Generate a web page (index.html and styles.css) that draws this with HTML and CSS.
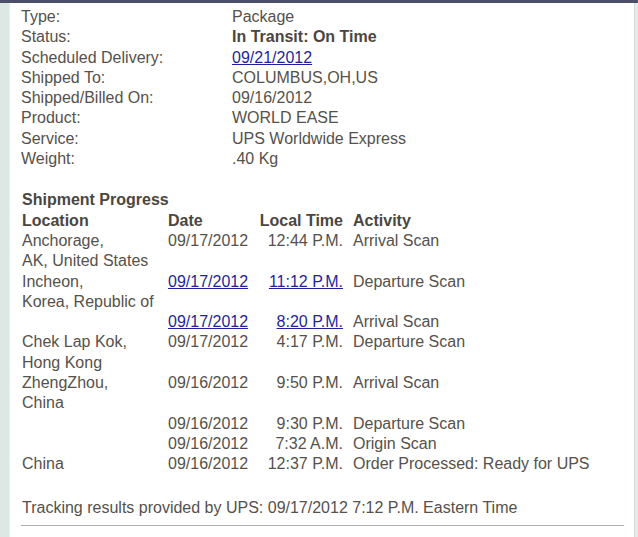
FILE: index.html
```html
<!DOCTYPE html>
<html>
<head>
<meta charset="utf-8">
<link rel="stylesheet" href="styles.css">
</head>
<body>
<div class="topbar"></div>
<div class="frame">
  <div class="side-left"></div>
  <main class="content">
    <div class="details">
      <div class="k">Type:</div><div class="v">Package</div>
      <div class="k">Status:</div><div class="v b">In Transit: On Time</div>
      <div class="k">Scheduled Delivery:</div><div class="v"><a href="#">09/21/2012</a></div>
      <div class="k">Shipped To:</div><div class="v">COLUMBUS,OH,US</div>
      <div class="k">Shipped/Billed On:</div><div class="v">09/16/2012</div>
      <div class="k">Product:</div><div class="v">WORLD EASE</div>
      <div class="k">Service:</div><div class="v">UPS Worldwide Express</div>
      <div class="k">Weight:</div><div class="v">.40 Kg</div>
    </div>
    <div class="progress">
      <div class="title">Shipment Progress</div>
      <div class="table">
        <div class="th">Location</div><div class="th">Date</div><div class="th tm">Local Time</div><div class="th act">Activity</div>

        <div>Anchorage,<br>AK, United States</div><div>09/17/2012</div><div class="tm">12:44 P.M.</div><div class="act">Arrival Scan</div>

        <div>Incheon,<br>Korea, Republic of</div><div><a href="#">09/17/2012</a></div><div class="tm"><a href="#">11:12 P.M.</a></div><div class="act">Departure Scan</div>

        <div></div><div><a href="#">09/17/2012</a></div><div class="tm"><a href="#">8:20 P.M.</a></div><div class="act">Arrival Scan</div>

        <div>Chek Lap Kok,<br>Hong Kong</div><div>09/17/2012</div><div class="tm">4:17 P.M.</div><div class="act">Departure Scan</div>

        <div>ZhengZhou,<br>China</div><div>09/16/2012</div><div class="tm">9:50 P.M.</div><div class="act">Arrival Scan</div>

        <div></div><div>09/16/2012</div><div class="tm">9:30 P.M.</div><div class="act">Departure Scan</div>

        <div></div><div>09/16/2012</div><div class="tm">7:32 A.M.</div><div class="act">Origin Scan</div>

        <div>China</div><div>09/16/2012</div><div class="tm">12:37 P.M.</div><div class="act">Order Processed: Ready for UPS</div>
      </div>
    </div>
    <p class="footer">Tracking results provided by UPS: 09/17/2012 7:12 P.M. Eastern Time</p>
    <hr class="rule">
  </main>
  <div class="side-right"></div>
</div>
</body>
</html>
```
FILE: styles.css
```css
html, body {
  margin: 0;
  padding: 0;
  height: 537px;
  overflow: hidden;
  background: #ffffff;
}
body {
  font-family: "Liberation Sans", Arial, sans-serif;
  font-size: 16px;
  line-height: 20.3px;
  color: #55514c;
}
.topbar {
  height: 3px;
  background: #4b5068;
}
.frame {
  display: flex;
  height: 534px;
}
.side-left {
  width: 9px;
  background: #dde8e4;
  border-right: 1px solid #e8eeec;
}
.side-right {
  width: 3px;
  background: #e6eaea;
  border-left: 1px solid #d8dcdc;
}
.content {
  flex: 1;
  padding: 4px 10px 0 11px;
  background: #ffffff;
}
a {
  color: #1f1fa0;
  text-decoration: underline;
}
.details {
  display: grid;
  grid-template-columns: 211px auto;
}
.b {
  font-weight: bold;
  color: #4a4641;
}
.progress {
  margin-top: 21px;
  padding-left: 1px;
}
.title {
  font-weight: bold;
  color: #4a4641;
}
.table {
  display: grid;
  grid-template-columns: 146px 91px 84px auto;
}
.th {
  font-weight: bold;
  color: #4a4641;
}
.tm {
  text-align: right;
}
.act {
  padding-left: 10px;
}
.footer {
  margin: 23px 0 0 1px;
}
.rule {
  margin: 7px 0 0 0;
  border: 0;
  border-top: 1px solid #b0b0b0;
  width: 603px;
}
```
